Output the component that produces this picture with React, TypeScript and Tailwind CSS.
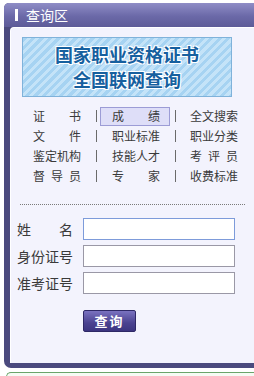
const cjk = "font-['Noto_Sans_CJK_SC','Noto_Sans',sans-serif]";

function Spread({ text }: { text: string }) {
  return (
    <span className="flex w-[48px] justify-between">
      {text.split("").map((c, i) => (
        <span key={i}>{c}</span>
      ))}
    </span>
  );
}

const rows = [
  ["证书", "成绩", "全文搜索"],
  ["文件", "职业标准", "职业分类"],
  ["鉴定机构", "技能人才", "考评员"],
  ["督导员", "专家", "收费标准"],
];

function Sep() {
  return <span className="block h-[12px] w-px bg-[#6a6a6a]" />;
}

export default function App() {
  return (
    <div className={`relative h-[376px] w-[254px] overflow-hidden bg-white ${cjk}`}>
      <div className="ml-[4px] mt-[3px] w-[262px] rounded-tl-[5px] rounded-bl-[7px] bg-[#4b4a7e] pb-[5px]">
        <div className="flex h-[24px] items-center rounded-tl-[5px] bg-[linear-gradient(#8f8dc6,#6b69a8_55%,#5d5b98)] pl-[11px]">
          <span className="h-[12px] w-[3px] bg-white" />
          <span className="ml-[8px] text-[14px] leading-none text-white">查询区</span>
        </div>
        <div className="ml-[6px] h-[336px] rounded-tl-[4px] border-l border-t border-white bg-[#f3f3fd] pt-[9px]">
          <div className="ml-[11px] flex h-[60px] w-[210px] flex-col items-center justify-center border border-[#7fb2da] bg-[repeating-linear-gradient(135deg,#a6d3f2_0px,#a6d3f2_3px,#c4e3f8_3px,#c4e3f8_6px)] text-[18px] font-bold leading-[25px] text-[#16609f] [text-shadow:1px_1px_0_#fff,-1px_-1px_0_#fff,1px_-1px_0_#fff,-1px_1px_0_#fff]">
            <span>国家职业资格证书</span>
            <span>全国联网查询</span>
          </div>
          <div className="mt-[9px] flex flex-col text-[12px] leading-none text-[#3a3a3a]">
            {rows.map((r, i) => (
              <div key={i} className="flex h-[20px] items-center pl-[22px]">
                <Spread text={r[0]} />
                <span className="ml-[15px] flex">
                  <Sep />
                </span>
                <span
                  className={`ml-[3px] flex h-[19px] w-[70px] items-center border pl-[11px] ${
                    i === 0 ? "border-[#9c9cd6] bg-[#dedef8]" : "border-transparent"
                  }`}
                >
                  <Spread text={r[1]} />
                </span>
                <span className="ml-[5px] flex">
                  <Sep />
                </span>
                <span className="ml-[14px]">
                  <Spread text={r[2]} />
                </span>
              </div>
            ))}
          </div>
          <div className="ml-[9px] mt-[18px] w-[225px] border-t border-dotted border-[#7a7a7a]" />
          <div className="mt-[13px] flex flex-col gap-[5px] text-[14px] text-[#3a3a3a]">
            {["姓名", "身份证号", "准考证号"].map((l, i) => (
              <div key={l} className="flex items-center pl-[6px]">
                {l.length === 2 ? (
                  <span className="flex w-[56px] justify-between">
                    <span>姓</span>
                    <span>名</span>
                  </span>
                ) : (
                  <span className="w-[56px]">{l}</span>
                )}
                <input
                  className={`ml-[10px] h-[22px] w-[152px] border bg-white outline-none ${
                    i === 0 ? "border-[#7d9bda]" : "border-[#9a98a6]"
                  }`}
                />
              </div>
            ))}
          </div>
          <button className="ml-[72px] mt-[16px] flex h-[22px] w-[53px] items-center justify-center rounded-[2px] border border-[#2e2866] bg-[linear-gradient(#7a72c0,#4a4290_60%,#3c3580)] text-[13px] font-bold tracking-[2px] text-white">
            查询
          </button>
        </div>
      </div>
      <div className="ml-[6px] mt-[4px] h-[20px] w-[260px] rounded-tl-[5px] border-l border-t border-[#6aa46a] bg-[#f6fbf4]" />
    </div>
  );
}
